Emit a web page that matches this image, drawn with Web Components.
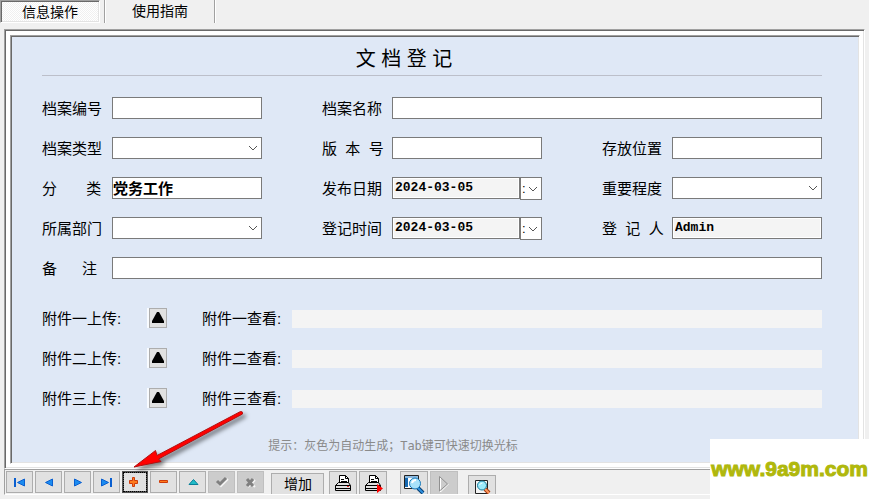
<!DOCTYPE html>
<html lang="zh-CN">
<head>
<meta charset="utf-8">
<title>文档登记</title>
<style>
  html {
    background: #f0f0f0;
  }
  body {
    margin: 0;
    font-family: "Liberation Sans", "Noto Sans CJK SC", sans-serif;
    font-size: 15px;
    color: #000;
  }
</style>
</head>
<body>
<document-page></document-page>

<script>
// Icons are drawn at 1:1 inside the button they belong to.
const ICONS = {
  first: ['0 0 27 22', '<path fill="#0a5fd0" d="M8 7h2v9H8z"/><path fill="#1c8cf0" stroke="#0a5fd0" d="M11.500 11.500L18.500 8v7z"/>'],
  prev: ['0 0 27 22', '<path fill="#1c8cf0" stroke="#0a5fd0" d="M10.500 11.500L17.500 8v7z"/>'],
  next: ['0 0 27 22', '<path fill="#1c8cf0" stroke="#0a5fd0" d="M17.500 11.500L10.500 8v7z"/>'],
  last: ['0 0 27 22', '<path fill="#1c8cf0" stroke="#0a5fd0" d="M15.500 11.500L8.500 8v7z"/><path fill="#0a5fd0" d="M17 7h2v9h-2z"/>'],
  plus: ['0 0 26 22', '<path fill="#ff7a1c" stroke="#cf3a08" d="M10.500 6.500h2v3h3v3h-3v3h-2v-3h-3v-3h3z"/>'],
  minus: ['0 0 27 22', '<path fill="#ff7a1c" stroke="#cf3a08" d="M9.500 9.500h8v2h-8z"/>'],
  up: ['0 0 27 22', '<path fill="#20bcc8" stroke="#087f98" d="M14.500 8.500L10 13.500h9z"/>'],
  check: ['0 0 27 22', '<path fill="none" stroke="#f4f4f4" stroke-width="2" d="M10 12l3 3 7-7"/><path fill="none" stroke="#808080" stroke-width="3" d="M9 10l3 3 6-6"/>'],
  cross: ['0 0 27 22', '<path stroke="#f4f4f4" stroke-width="2" d="M11 9l7 7M18 9l-7 7"/><path stroke="#808080" stroke-width="3" d="M10 8l6 7M16 8l-6 7"/>'],
  print: ['0 0 28 24', '<g fill="#fff" stroke="#000"><path d="M10.500 12.500v-8h6l3 3v5z"/><path d="M16.500 4.500v3h3" fill="none"/><path d="M12 8.500h3M12 10.500h6"/><path fill="#e1e1e1" d="M6.500 14.500l3-3h10l2 3v5h-15zM6.500 14.500h15M7 17.500h14"/></g><path fill="#e22" d="M18 15h2v1h-2z"/>'],
  printNext: ['0 0 28 24', '<g fill="#fff" stroke="#000"><path d="M10.500 12.500v-8h6l3 3v5z"/><path d="M16.500 4.500v3h3" fill="none"/><path d="M12 8.500h3M12 10.500h6"/><path fill="#e1e1e1" d="M6.500 14.500l3-3h10l2 3v5h-15zM6.500 14.500h15M7 17.500h14"/></g><path fill="#f00" d="M18 13l6 4.500-6 4.500z"/>'],
  preview: ['0 0 28 24', '<path fill="#fff" stroke="#222" d="M4.500 4.500h14v13h-14z"/><path fill="#8dbbe2" d="M5 5h13v2H5z"/><path fill="#1769b0" d="M5 7h3v9H5z"/><path stroke="#073f73" stroke-width="4" d="M18 17l5 5"/><path stroke="#2f91df" stroke-width="2" d="M18 17l5 5"/><circle cx="15" cy="12.500" r="5.500" fill="#a8e2fa" stroke="#1678b9"/><path fill="none" stroke="#fff" stroke-width="2" d="M12 12q1-3 4-3"/>'],
  play: ['0 0 28 24', '<path fill="none" stroke="#fff" d="M10.500 6v15l8-8"/><path fill="none" stroke="#909090" d="M9.500 20V5.500l8 7.500z"/>'],
  find: ['0 0 28 24', '<path fill="#f4f4f4" stroke="#222" d="M7.500 5.500h12v13h-12z"/><path stroke="#a33a10" stroke-width="4" d="M17 14l4 4"/><path stroke="#ff9a60" stroke-width="2" d="M17 14l4 4"/><circle cx="14" cy="10.500" r="4.500" fill="#9beafa" stroke="#157a9a"/><path fill="none" stroke="#fff" d="M11.500 10q1-2 3-2"/>'],
};

const CHEVRON = '<svg width="10" height="6" viewBox="0 0 10 6" aria-hidden="true"><path fill="none" stroke="#555" d="M1 1l4 4 4-4"/></svg>';

class PageTab extends HTMLElement {
  constructor() {
    super();
    this.attachShadow({ mode: 'open' });
    this.shadowRoot.innerHTML = `
      <style>
        :host { display: block; }
        button {
          box-sizing: border-box;
          height: 23px;
          padding: 0 26px 1px 27px;
          border: 0;
          border-right: 1px solid #a0a0a0;
          box-shadow: 1px 0 #fff;
          background: none;
          font: inherit;
          color: inherit;
          line-height: 22px;
        }
        :host([selected]) button {
          padding: 1px 21px 0;
          border: 1px solid;
          border-color: #a0a0a0 #fff #fff #a0a0a0;
          box-shadow: inset 1px 1px #696969, inset -1px -1px #e3e3e3;
          background: repeating-conic-gradient(#fff 0 25%, #f0f0f0 0 50%) 0 0 / 2px 2px;
          line-height: 20px;
        }
      </style>
      <button role="tab"><slot></slot></button>`;
  }

  connectedCallback() {
    this.shadowRoot.querySelector('button').setAttribute('aria-selected', this.hasAttribute('selected'));
  }
}

class TabStrip extends HTMLElement {
  constructor() {
    super();
    this.attachShadow({ mode: 'open' });
    this.shadowRoot.innerHTML = `
      <style>
        :host {
          display: flex;
          font-size: 14px;
        }
        .divider {
          width: 1px;
          margin-left: 4px;
          background: #a0a0a0;
          box-shadow: 1px 0 #fff;
        }
      </style>
      <page-tab selected>信息操作</page-tab>
      <div class="divider"></div>
      <page-tab>使用指南</page-tab>`;
  }
}

class SunkenFrame extends HTMLElement {
  constructor() {
    super();
    this.attachShadow({ mode: 'open' });
    this.shadowRoot.innerHTML = `
      <style>
        :host { display: block; }
        .outer, .inner {
          border: 1px solid;
          border-color: #a0a0a0 #fff #fff #a0a0a0;
        }
        .outer {
          padding: 5px 4px 4px 5px;
          background: #fff;
          box-shadow: inset 1px 1px #696969, inset -1px -1px #e3e3e3;
        }
        .inner {
          padding: 1px;
          background: #dfe8f6;
          box-shadow: inset 1px 1px #696969, inset -1px -1px #e3e3e3;
        }
      </style>
      <div class="outer"><div class="inner"><slot></slot></div></div>`;
  }
}

class FormField extends HTMLElement {
  constructor() {
    super();
    this.attachShadow({ mode: 'open' });
  }

  connectedCallback() {
    this.shadowRoot.innerHTML = `
      <style>
        :host {
          display: grid;
          grid-template-columns: 70px minmax(0, 1fr);
          align-items: start;
          height: 22px;
        }
        label {
          white-space: pre;
          line-height: 24px;
        }
        .control {
          display: flex;
        }
        input, select {
          box-sizing: border-box;
          width: 100%;
          min-width: 0;
          height: 22px;
          margin: 0;
          padding: 0 0 2px;
          border: 1px solid #7a7a7a;
          border-radius: 0;
          outline: 0;
          background: #fff;
          color: #000;
          font: bold 15px "Noto Sans CJK SC", sans-serif;
          appearance: none;
        }
        input[readonly] {
          padding: 0 2px 1px;
          background: #f4f4f4;
          box-shadow: inset 0 0 0 1px #fff;
          font: bold 13px "Liberation Mono", monospace;
        }
        .drop {
          display: grid;
          flex: 1;
          align-items: center;
        }
        .drop > * { grid-area: 1 / 1; }
        .drop svg {
          justify-self: end;
          margin-right: 4px;
          pointer-events: none;
        }
        .small { flex: 0 0 22px; }
        .small select {
          height: 23px;
          padding: 0 1px;
          font: 13px "Liberation Sans", sans-serif;
        }
      </style>
      <label for="field">${this.getAttribute('label')}</label>
      <div class="control">${this.controlMarkup()}</div>`;
  }

  controlMarkup() {
    const value = this.getAttribute('value') || '';
    const readonly = this.hasAttribute('readonly') ? 'readonly' : '';
    const input = `<input id="field" type="text" value="${value}" ${readonly}>`;
    switch (this.getAttribute('kind')) {
      case 'select':
        return `<div class="drop"><select id="field"><option></option></select>${CHEVRON}</div>`;
      case 'date':
        return `${input}<div class="drop small"><select aria-label="选择日期"><option>:</option></select>${CHEVRON}</div>`;
      default:
        return input;
    }
  }
}

class AttachmentRow extends HTMLElement {
  constructor() {
    super();
    this.attachShadow({ mode: 'open' });
  }

  connectedCallback() {
    const name = this.getAttribute('name');
    this.shadowRoot.innerHTML = `
      <style>
        :host {
          display: grid;
          grid-template-columns: 105px 55px 90px minmax(0, 1fr);
          align-items: start;
          height: 20px;
        }
        label {
          line-height: 22px;
          white-space: nowrap;
        }
        button {
          display: grid;
          place-items: center;
          box-sizing: border-box;
          width: 18px;
          height: 20px;
          margin-left: 2px;
          padding: 0 0 1px;
          border: 1px solid #adadad;
          box-shadow: -2px 0 #f8fbff;
          background: #e1e1e1;
        }
        input {
          box-sizing: border-box;
          width: 100%;
          height: 18px;
          margin: 2px 0 0;
          padding: 0 2px;
          border: 0;
          background: #f4f4f4;
        }
      </style>
      <label for="upload">${name}上传:</label>
      <button id="upload"><svg width="14" height="11" viewBox="0 0 14 11" aria-hidden="true"><path d="M6 0h2l5 9v2H1V9z"/></svg></button>
      <label for="view">${name}查看:</label>
      <input id="view" type="text" readonly>`;
  }
}

class DocumentForm extends HTMLElement {
  constructor() {
    super();
    this.attachShadow({ mode: 'open' });
    this.shadowRoot.innerHTML = `
      <style>
        :host {
          display: block;
          padding: 6px 36px 6px 30px;
        }
        h1 {
          margin: 0;
          padding-right: 56px;
          border-bottom: 1px solid #bcbfca;
          font-size: 20px;
          font-weight: normal;
          line-height: 32px;
          text-align: center;
        }
        .fields {
          display: grid;
          grid-template-columns: repeat(3, minmax(0, 1fr));
          gap: 18px 60px;
          margin-top: 21px;
        }
        .wide { grid-column: span 2; }
        .full { grid-column: 1 / -1; }
        .attachments {
          display: grid;
          gap: 20px;
          margin-top: 29px;
        }
        p {
          margin: 28px 0 0;
          padding-right: 78px;
          color: #8a8a8a;
          font-family: "DejaVu Sans Mono", "Noto Sans CJK SC", monospace;
          font-size: 12px;
          line-height: 20px;
          text-align: center;
        }
      </style>
      <h1>文 档 登 记</h1>
      <div class="fields">
        <form-field label="档案编号"></form-field>
        <form-field class="wide" label="档案名称"></form-field>
        <form-field label="档案类型" kind="select"></form-field>
        <form-field label="版  本  号"></form-field>
        <form-field label="存放位置"></form-field>
        <form-field label="分       类" value="党务工作"></form-field>
        <form-field label="发布日期" kind="date" value="2024-03-05" readonly></form-field>
        <form-field label="重要程度" kind="select"></form-field>
        <form-field label="所属部门" kind="select"></form-field>
        <form-field label="登记时间" kind="date" value="2024-03-05" readonly></form-field>
        <form-field label="登  记  人" value="Admin" readonly></form-field>
        <form-field class="full" label="备      注"></form-field>
      </div>
      <div class="attachments">
        <attachment-row name="附件一"></attachment-row>
        <attachment-row name="附件二"></attachment-row>
        <attachment-row name="附件三"></attachment-row>
      </div>
      <p>提示：灰色为自动生成；Tab键可快速切换光标</p>`;
  }
}

class ToolButton extends HTMLElement {
  constructor() {
    super();
    this.attachShadow({ mode: 'open' });
  }

  connectedCallback() {
    const [viewBox, shapes] = ICONS[this.getAttribute('icon')] || [];
    const [, , width, height] = viewBox ? viewBox.split(' ') : [];
    const icon = viewBox ? `<svg width="${width}" height="${height}" viewBox="${viewBox}" aria-hidden="true">${shapes}</svg>` : '';
    const title = this.getAttribute('name');
    this.shadowRoot.innerHTML = `
      <style>
        :host { display: block; }
        button {
          display: block;
          padding: 0;
          border: 0;
          outline: 1px solid #adadad;
          outline-offset: -1px;
          background: #e1e1e1;
          color: #000;
          font: inherit;
          line-height: 22px;
        }
        button:disabled {
          outline-color: #bfbfbf;
          background: #ccc;
        }
        svg { display: block; }
        :host([active]) button {
          outline: 1px dotted #000;
          outline-offset: -2px;
          box-shadow: inset 0 0 0 2px #555;
        }
        :host([text]) button { padding: 0 12px 2px 13px; }
      </style>
      <button ${title ? `aria-label="${title}"` : ''} ${this.hasAttribute('disabled') ? 'disabled' : ''}>${icon}<slot></slot></button>`;
  }
}

class RecordToolbar extends HTMLElement {
  constructor() {
    super();
    this.attachShadow({ mode: 'open' });
    this.shadowRoot.innerHTML = `
      <style>
        :host {
          display: flex;
          align-items: flex-start;
          box-sizing: border-box;
          height: 26px;
          padding: 1px 0 0 1px;
          border: 1px solid;
          border-color: #a0a0a0 transparent #fff #a0a0a0;
          overflow: hidden;
          font-size: 14px;
        }
        .group {
          display: flex;
          gap: 2px;
        }
        .add { margin: 2px 5px 0 7px; }
        .preview { margin-left: 13px; }
        .find { margin: 4px 0 0 10px; }
      </style>
      <div class="group">
        <tool-button icon="first" name="首记录"></tool-button>
        <tool-button icon="prev" name="上一条"></tool-button>
        <tool-button icon="next" name="下一条"></tool-button>
        <tool-button icon="last" name="末记录"></tool-button>
        <tool-button icon="plus" name="新增" active></tool-button>
        <tool-button icon="minus" name="删除"></tool-button>
        <tool-button icon="up" name="编辑"></tool-button>
        <tool-button icon="check" name="提交" disabled></tool-button>
        <tool-button icon="cross" name="取消" disabled></tool-button>
      </div>
      <tool-button class="add" text>增加</tool-button>
      <div class="group">
        <tool-button icon="print" name="打印"></tool-button>
        <tool-button icon="printNext" name="打印当前"></tool-button>
      </div>
      <div class="group preview">
        <tool-button icon="preview" name="预览"></tool-button>
        <tool-button icon="play" name="运行" disabled></tool-button>
      </div>
      <tool-button class="find" icon="find" name="查找"></tool-button>`;
  }
}

// Red arrow that points at the add-record button.
class PointerArrow extends HTMLElement {
  constructor() {
    super();
    this.attachShadow({ mode: 'open' });
    this.shadowRoot.innerHTML = `
      <style>
        :host {
          display: block;
          pointer-events: none;
        }
        svg {
          display: block;
          filter: drop-shadow(3px 3px 2px rgba(0, 0, 0, 0.5));
        }
      </style>
      <svg width="124" height="70" viewBox="0 0 124 70" aria-hidden="true">
        <path fill="#f00" stroke="#b01010" d="M4 61L25.500 44.500 27 49.500 110.500 5.500Q113 5 112.500 8L28.500 53 31 55.500z"/>
      </svg>`;
  }
}

class SiteMark extends HTMLElement {
  constructor() {
    super();
    this.attachShadow({ mode: 'open' });
    this.shadowRoot.innerHTML = `
      <style>
        :host {
          display: block;
          box-sizing: border-box;
          height: 60px;
          padding: 14px 1px 0;
          background: #fff;
          color: #b0b80c;
          font: bold 21px/32px "Liberation Sans", sans-serif;
          white-space: nowrap;
          -webkit-text-stroke: 1px #b0b80c;
        }
      </style>
      <slot></slot>`;
  }
}

class DocumentPage extends HTMLElement {
  constructor() {
    super();
    this.attachShadow({ mode: 'open' });
    this.shadowRoot.innerHTML = `
      <style>
        :host {
          display: block;
          position: relative;
          min-height: 100vh;
        }
        sunken-frame { margin: 6px 4px 0; }
        record-toolbar { margin-left: 4px; }
        pointer-arrow {
          position: absolute;
          left: 130px;
          top: 406px;
        }
        site-mark {
          position: absolute;
          right: 0;
          bottom: 0;
        }
      </style>
      <tab-strip></tab-strip>
      <sunken-frame><document-form></document-form></sunken-frame>
      <record-toolbar></record-toolbar>
      <pointer-arrow></pointer-arrow>
      <site-mark>www.9a9m.com</site-mark>`;
  }
}

window.customElements.define('page-tab', PageTab);
window.customElements.define('tab-strip', TabStrip);
window.customElements.define('sunken-frame', SunkenFrame);
window.customElements.define('form-field', FormField);
window.customElements.define('attachment-row', AttachmentRow);
window.customElements.define('document-form', DocumentForm);
window.customElements.define('tool-button', ToolButton);
window.customElements.define('record-toolbar', RecordToolbar);
window.customElements.define('pointer-arrow', PointerArrow);
window.customElements.define('site-mark', SiteMark);
window.customElements.define('document-page', DocumentPage);
</script>
</body>
</html>
